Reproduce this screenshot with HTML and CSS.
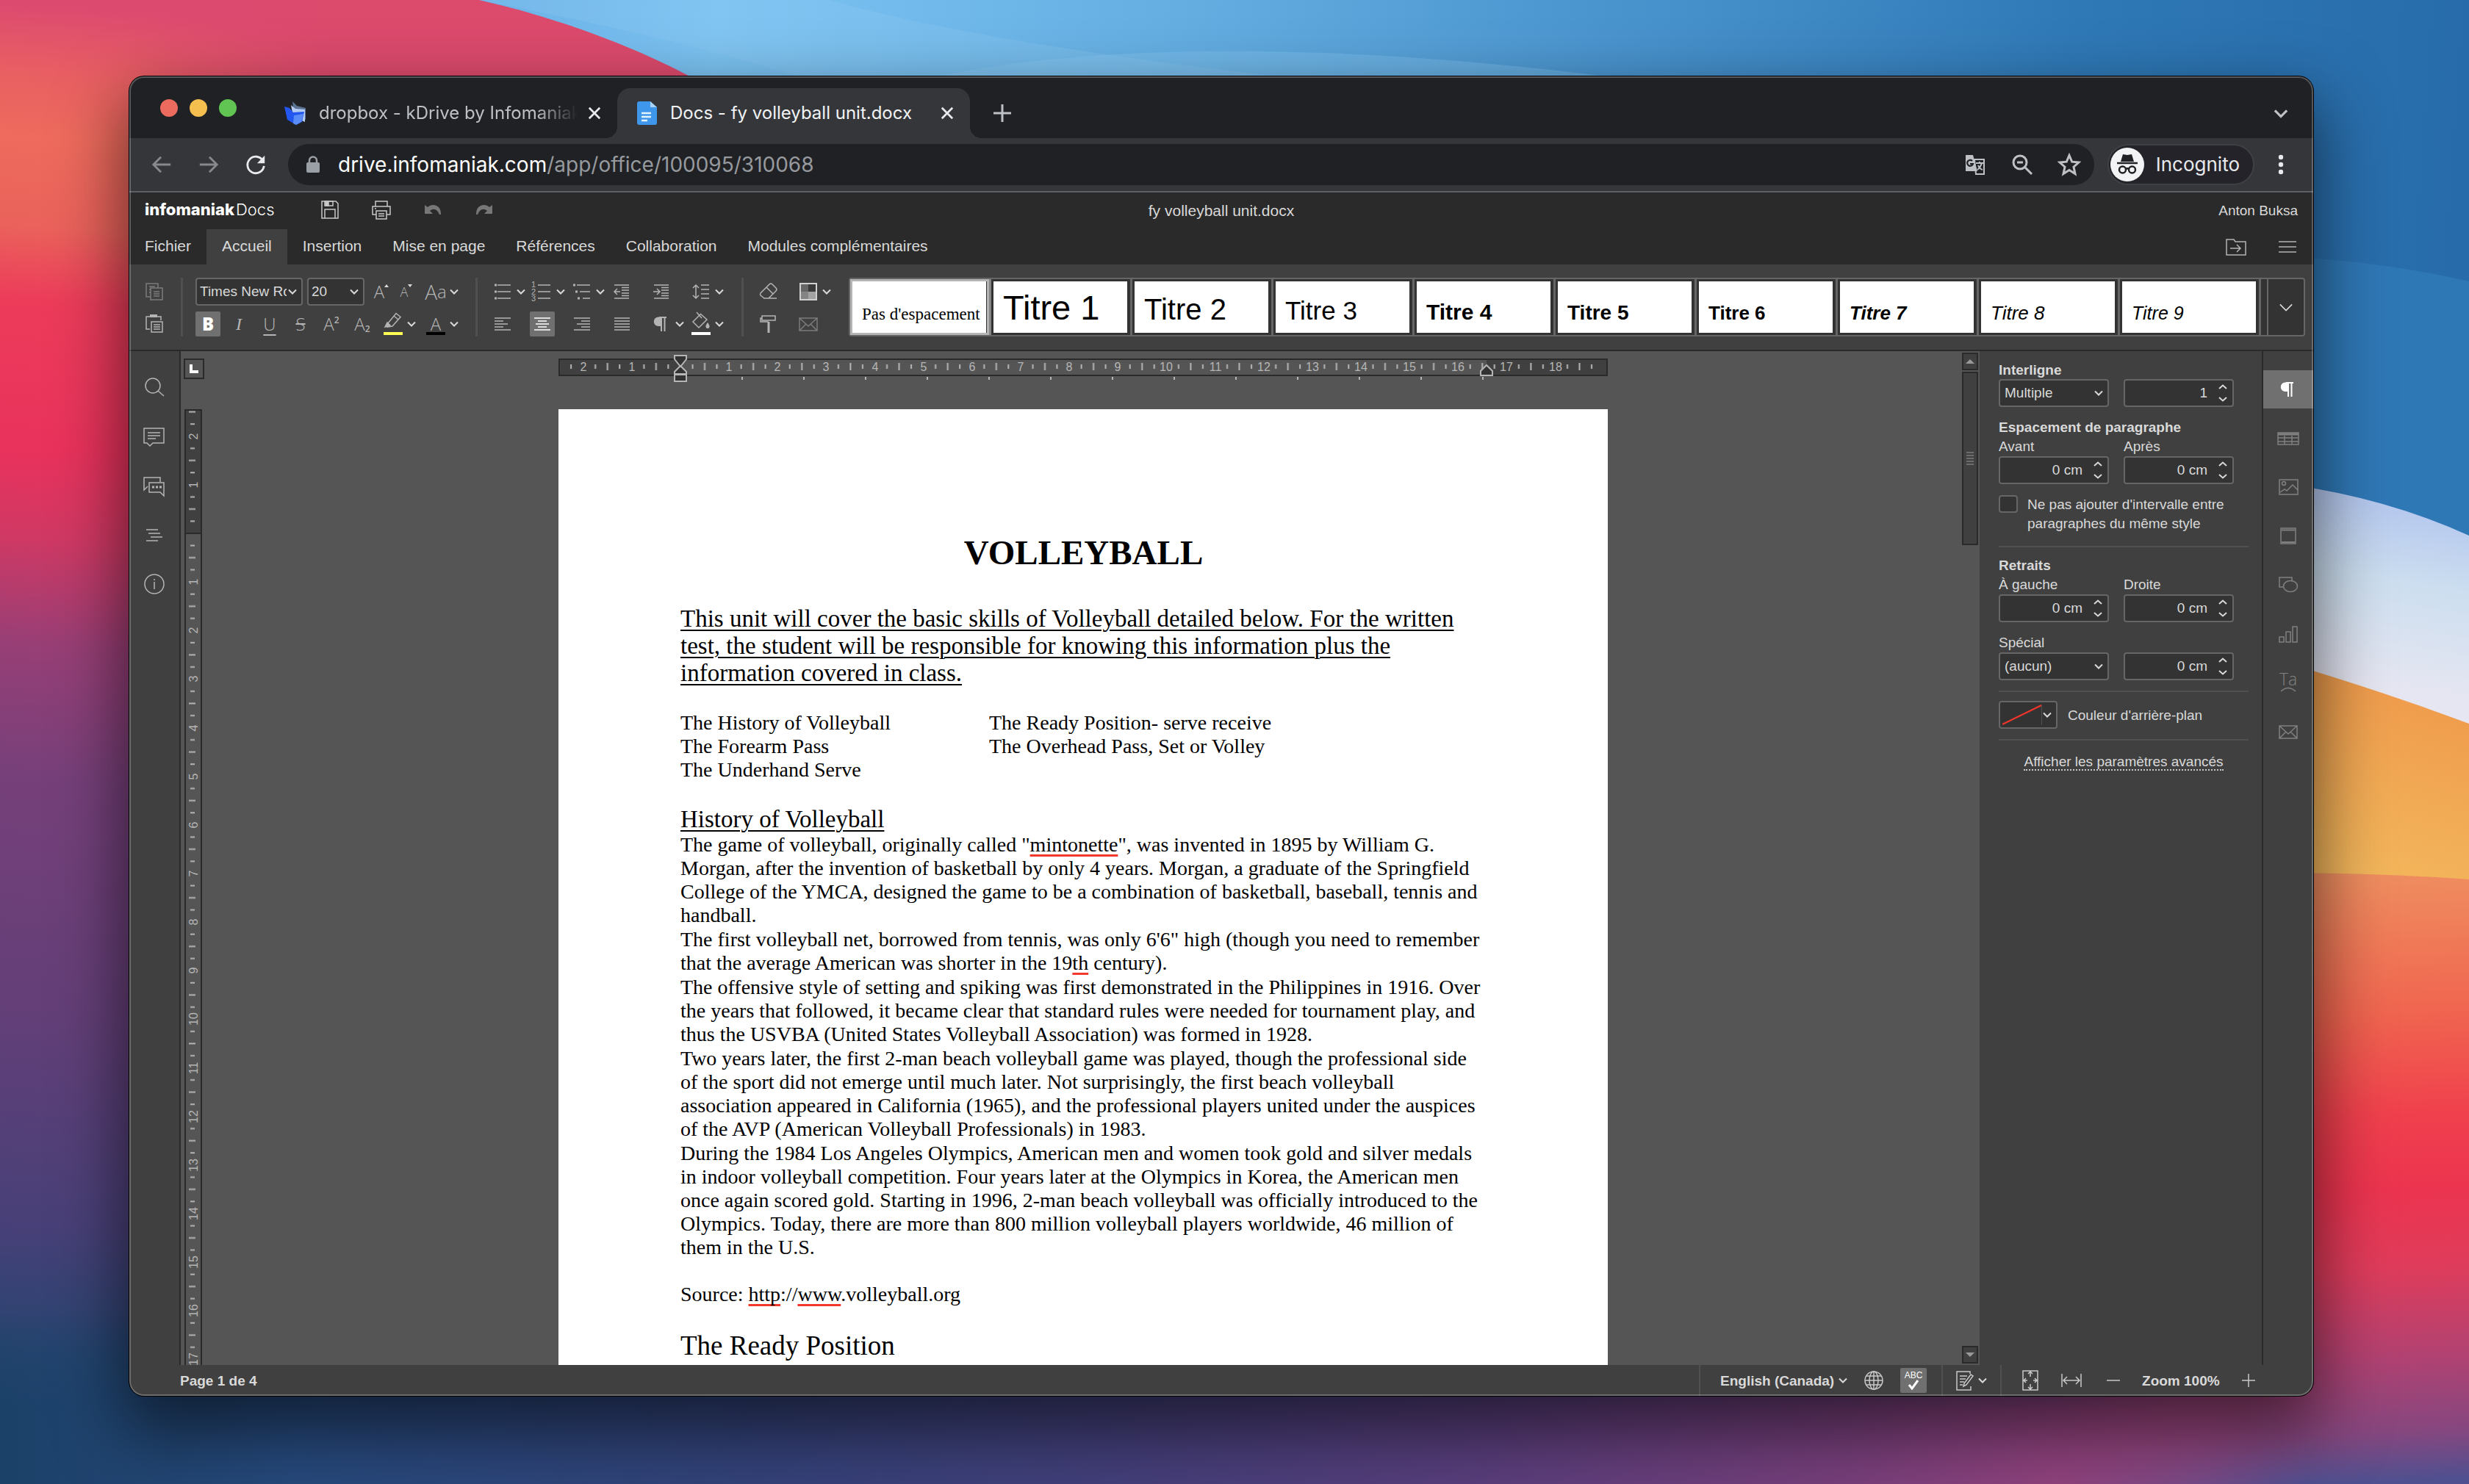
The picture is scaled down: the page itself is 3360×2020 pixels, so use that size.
FILE: index.html
```html
<!DOCTYPE html>
<html lang="fr">
<head>
<meta charset="utf-8">
<title>Docs - fy volleyball unit.docx</title>
<meta name="viewport" content="width=device-width, initial-scale=1">
<link rel="stylesheet" href="styles.css">
</head>
<body>

<svg class="sprite" aria-hidden="true">
  <symbol id="chev" viewBox="0 0 12 8"><path d="M1 1.500l5 5 5-5"/></symbol>
  <symbol id="spin" viewBox="0 0 12 24"><path d="M1 6l5-4.500 5 4.500M1 18l5 4.500 5-4.500"/></symbol>
  <symbol id="close" viewBox="0 0 20 20"><path d="M2 2l16 16M18 2L2 18"/></symbol>
  <symbol id="copy" viewBox="0 0 40 40"><path d="M15 27H9V9h16v6M13 13h8M13 17h3M13 21h2M15 15h16v16H15zM19 20h8M19 23h8M19 26h8"/></symbol>
  <symbol id="paste" viewBox="0 0 40 40"><path d="M14 27H9V10h20v5M16 17h15v14H16zM19 21h9M19 24h9M19 27h9"/><path d="M14 9h10" stroke-width="4"/></symbol>
  <symbol id="pen" viewBox="0 0 40 40"><path d="M13 22L24 8.500l6 5L19 26l-7 1zM21 12l6 5"/><path d="M9 27l3-6 4 4z" fill="currentColor"/></symbol>
  <symbol id="bullets" viewBox="0 0 40 40"><path d="M13 11h18M13 20h18M13 29h18"/><path d="M9 11h3M9 20h3M9 29h3" stroke-width="3"/></symbol>
  <symbol id="multi" viewBox="0 0 40 40"><path d="M13 11h18M17 20h14M21 29h10"/><path d="M8 11h3M11 20h3M14 29h3" stroke-width="3"/></symbol>
  <symbol id="outdent" viewBox="0 0 40 40"><path d="M10 11h20M10 29h20M20 14.500h10M20 18h10M20 22h10M20 25.500h10M10 20h8M14 16l-4 4 4 4"/></symbol>
  <symbol id="indent" viewBox="0 0 40 40"><path d="M10 11h20M10 29h20M20 14.500h10M20 18h10M20 22h10M20 25.500h10M9 20h9M14 16l4 4-4 4"/></symbol>
  <symbol id="spacing" viewBox="0 0 40 40"><path d="M20 11h11M20 17h11M20 23h11M20 29h11M13 11v18M9 15l4-4 4 4M9 25l4 4 4-4"/></symbol>
  <symbol id="eraser" viewBox="0 0 40 40"><path d="M14 29l-5-4q-1-1 0-3L21 10q2-2 4 0l5 5q2 2 0 4L20 29M13 29h18M17 14l9 9"/></symbol>
  <symbol id="al" viewBox="0 0 40 40"><path d="M9 12h22M9 16h12M9 20h18M9 24h12M9 28h22"/></symbol>
  <symbol id="ac" viewBox="0 0 40 40"><path d="M9 12h22M14 16h12M11 20h18M14 24h12M9 28h22"/></symbol>
  <symbol id="ar" viewBox="0 0 40 40"><path d="M9 12h22M19 16h12M13 20h18M19 24h12M9 28h22"/></symbol>
  <symbol id="aj" viewBox="0 0 40 40"><path d="M10 12h21M10 16h21M10 20h21M10 24h21M10 28h21"/></symbol>
  <symbol id="pilcrow" viewBox="0 0 40 40"><path d="M20 11v19M24.500 11v19M17 11h10" stroke-width="2"/><path d="M20 10.500h-4a6 6 0 0 0 0 12.500h4z" fill="currentColor" stroke="none"/></symbol>
  <symbol id="bucket" viewBox="0 0 40 40"><path d="M19 9l9 8-11 11-8-8L20 9M14 7l7 8"/><path d="M29 21q3 4 2.500 5.500a2.500 2.500 0 0 1-5 0Q26 25 29 21z" fill="currentColor" stroke="none"/></symbol>
  <symbol id="brush" viewBox="0 0 40 40"><path d="M11 9h18v6H11zM11 12H9v5h11"/><path d="M20 17v15" stroke-width="3"/></symbol>
  <symbol id="mail" viewBox="0 0 40 40"><path d="M8 12h24v17H8zM8 12l12 11 12-11M8 29l9-9M32 29l-9-9"/></symbol>
  <symbol id="save" viewBox="0 0 40 40"><path d="M9 8h19l3 3v20H9zM13 31V19h14v12"/><path d="M13 8h11v6H13z"/><path d="M14 9h4v5h-4z" fill="currentColor"/></symbol>
  <symbol id="print" viewBox="0 0 40 40"><path d="M12 15V8h16v7M13 26H8V15h24v11h-5M13 21h14v11H13zM16 25h8M16 28h8M11 18h2"/></symbol>
  <symbol id="undo" viewBox="0 0 40 40"><path d="M9 13v12h11l-4-4q6-5 11 1l2 4h2q0-12-10-13-5 0-8 3z" fill="currentColor" stroke="none"/></symbol>
  <symbol id="redo" viewBox="0 0 40 40"><path d="M31 13v12H20l4-4q-6-5-11 1l-2 4H9q0-12 10-13 5 0 8 3z" fill="currentColor" stroke="none"/></symbol>
  <symbol id="folder" viewBox="0 0 40 40"><path d="M7 10h10l2 3h14v18H7zM12 22h14M21 17l5 5-5 5"/></symbol>
  <symbol id="burger" viewBox="0 0 40 40"><path d="M8 13h24M8 20h24M8 27h24"/></symbol>
  <symbol id="search" viewBox="0 0 40 40"><circle cx="18" cy="18" r="10"/><path d="M25 25l8 7"/></symbol>
  <symbol id="comment" viewBox="0 0 40 40"><path d="M6 9h27v20H18l-4 4-4-4H6zM11 15h17M11 19h17M11 23h11"/></symbol>
  <symbol id="chat" viewBox="0 0 40 40"><path d="M28 15V9H6v17l5-5M13 16h20v18l-5-5H13z"/><path d="M17 22h3M22 22h3M27 22h3" stroke-width="3"/></symbol>
  <symbol id="nav" viewBox="0 0 40 40"><path d="M9 13h16M12 18h16M15 23h16M9 28h16"/></symbol>
  <symbol id="info" viewBox="0 0 40 40"><circle cx="20" cy="20" r="13"/><path d="M20 17v10M20 13v2"/></symbol>
  <symbol id="table" viewBox="0 0 40 40"><path d="M6 12h28v16H6zM6 19h28M6 24h28M15 16v12M25 16v12"/><path d="M6 14h28" stroke-width="3"/></symbol>
  <symbol id="image" viewBox="0 0 40 40"><path d="M8 10h25v20H8zM9 27l6-4 3 2 8-8 7 7"/><circle cx="14" cy="15" r="2.500"/></symbol>
  <symbol id="headfoot" viewBox="0 0 40 40"><path d="M10 9h20v21H10z"/><path d="M11 11.500h18M11 28h18" stroke-width="2"/></symbol>
  <symbol id="shape" viewBox="0 0 40 40"><path d="M13 23H8V10h17v5"/><ellipse cx="23" cy="22" rx="9.500" ry="7.500"/></symbol>
  <symbol id="chart" viewBox="0 0 40 40"><path d="M8 24h6v7H8zM17 17h6v14h-6zM26 10h6v21h-6z"/></symbol>
  <symbol id="globe" viewBox="0 0 40 40"><circle cx="20" cy="20" r="12"/><ellipse cx="20" cy="20" rx="6" ry="12"/><path d="M20 8v24M8 20h24M10 14h20M10 26h20"/></symbol>
  <symbol id="track" viewBox="0 0 40 40"><path d="M29 28v5H10V8h18v3M14 14h10M14 18h8M14 22h6M14 26h4"/><path d="M19 28l1-4 9-12 3 2-9 12z"/></symbol>
  <symbol id="fitpage" viewBox="0 0 40 40"><path d="M10 7h20v26H10zM20 9v6M17 11l3-3 3 3M20 31v-6M17 29l3 3 3-3M11 20h5M14 17l-3 3 3 3M29 20h-5M26 17l3 3-3 3"/></symbol>
  <symbol id="fitwidth" viewBox="0 0 40 40"><path d="M7 11v18M33 11v18M9 20h22M14 15l-5 5 5 5M26 15l5 5-5 5"/></symbol>
</svg>

<svg class="wallpaper" viewBox="0 0 3360 2020" preserveAspectRatio="none" aria-hidden="true">
  <defs>
    <linearGradient id="gl" gradientUnits="userSpaceOnUse" x1="0" y1="0" x2="-140" y2="2020">
      <stop offset="0" stop-color="#dc4a70"/><stop offset=".05" stop-color="#e96062"/><stop offset=".09" stop-color="#ee6b5d"/>
      <stop offset=".15" stop-color="#ea625b"/><stop offset=".2" stop-color="#ec3c5a"/><stop offset=".3" stop-color="#e9325c"/>
      <stop offset=".36" stop-color="#cf3964"/><stop offset=".43" stop-color="#983f76"/><stop offset=".52" stop-color="#76407a"/>
      <stop offset=".68" stop-color="#633f78"/><stop offset=".82" stop-color="#484078"/><stop offset=".91" stop-color="#25456f"/><stop offset="1" stop-color="#1c4168"/>
    </linearGradient>
    <linearGradient id="gtop" x1="0" y1="0" x2="1" y2="0">
      <stop offset=".18" stop-color="#dd4a70" stop-opacity="0"/><stop offset=".45" stop-color="#dc4a6c"/><stop offset="1" stop-color="#dc4a6c"/>
    </linearGradient>
    <linearGradient id="gblue" gradientUnits="userSpaceOnUse" x1="650" y1="0" x2="3360" y2="200">
      <stop offset="0" stop-color="#6bb1e6"/><stop offset=".12" stop-color="#7cc3f2"/><stop offset=".35" stop-color="#64aee2"/>
      <stop offset=".6" stop-color="#4690cb"/><stop offset=".8" stop-color="#2f79b7"/><stop offset="1" stop-color="#276baa"/>
    </linearGradient>
    <linearGradient id="gbot" x1="0" y1="0" x2="1" y2="0">
      <stop offset="0" stop-color="#1c4168"/><stop offset=".12" stop-color="#26497c"/><stop offset=".3" stop-color="#334279"/>
      <stop offset=".45" stop-color="#433f7a"/><stop offset=".6" stop-color="#593e7c"/><stop offset=".75" stop-color="#783f7b"/><stop offset=".9" stop-color="#a3457f"/><stop offset="1" stop-color="#8a4a84"/>
    </linearGradient>
    <linearGradient id="fadey" gradientUnits="userSpaceOnUse" x1="0" y1="1790" x2="0" y2="1920"><stop offset="0" stop-color="#000"/><stop offset="1" stop-color="#fff"/></linearGradient>
    <linearGradient id="fadex" gradientUnits="userSpaceOnUse" x1="2800" y1="0" x2="3140" y2="0"><stop offset="0" stop-color="#000"/><stop offset="1" stop-color="#fff"/></linearGradient>
    <mask id="my" maskUnits="userSpaceOnUse" x="0" y="0" width="3360" height="2020"><rect width="3360" height="2020" fill="url(#fadey)"/></mask>
    <mask id="mx" maskUnits="userSpaceOnUse" x="0" y="0" width="3360" height="2020"><rect width="3360" height="2020" fill="url(#fadex)"/></mask>
    <linearGradient id="gwhite" gradientUnits="userSpaceOnUse" x1="3250" y1="670" x2="3210" y2="930">
      <stop offset="0" stop-color="#b2c5ee"/><stop offset=".45" stop-color="#ccdeef"/><stop offset="1" stop-color="#e6e6f2"/>
    </linearGradient>
    <linearGradient id="gor" gradientUnits="userSpaceOnUse" x1="3300" y1="930" x2="3220" y2="1190">
      <stop offset="0" stop-color="#ef9a4c"/><stop offset="1" stop-color="#f3b65b"/>
    </linearGradient>
    <linearGradient id="gred" gradientUnits="userSpaceOnUse" x1="3148" y1="1188" x2="3180" y2="2020">
      <stop offset="0" stop-color="#ef8f60"/><stop offset=".24" stop-color="#f0644f"/><stop offset=".4" stop-color="#f0404d"/><stop offset=".52" stop-color="#ec344f"/>
      <stop offset=".65" stop-color="#df3c5b"/><stop offset=".8" stop-color="#b04272"/><stop offset=".92" stop-color="#85477f"/><stop offset="1" stop-color="#4f5090"/>
    </linearGradient>
  </defs>
  <rect width="3360" height="2020" fill="url(#gl)"/>
  <rect width="1000" height="140" fill="url(#gtop)"/>
  <rect y="1700" width="3360" height="320" fill="url(#gbot)" mask="url(#my)"/>
  <path d="M652 0C760 24 870 66 950 110L1400 400V1000H3360V0z" fill="url(#gblue)"/>
  <path d="M1130 0C1300 50 1600 90 1800 110H1100Q960 60 652 0z" fill="#8fccf5" opacity=".25"/>
  <path d="M1250 110C1500 50 1900 60 2300 120z" fill="#8fccf5" opacity=".3"/>
  <path d="M3000 346Q3200 346 3360 383V900H3000z" fill="#2f78b6"/>
  <path d="M3000 650Q3200 656 3360 729V1200H3000z" fill="url(#gwhite)"/>
  <path d="M3000 870Q3200 925 3360 985V1300H3000z" fill="url(#gor)"/>
  <path d="M2800 1200Q3100 1178 3360 1197V2020H2800z" fill="url(#gred)" mask="url(#mx)"/>
</svg>

<div class="window">

  <div class="tabstrip">
    <div class="lights"><button class="light red" aria-label="Fermer"></button><button class="light amber" aria-label="Réduire"></button><button class="light green" aria-label="Agrandir"></button></div>
    <div class="tab">
      <svg class="favicon" viewBox="0 0 34 34"><path d="M12 1l6 6 12 3v16L14 18z" fill="#5c7396"/><path d="M10 6l6 5 13 1v17L13 22z" fill="#b4ccf2"/><path d="M1 8l7 2 5 6 15-1-3 14-8 4L5 26z" fill="#2257f0"/><path d="M14 20l13-2-3 11-7 4-4-2z" fill="#5b8df8"/></svg>
      <span class="tab-title faded">dropbox - kDrive by Infomaniak</span>
      <button class="tab-close" aria-label="Fermer l'onglet"><svg><use href="#close"/></svg></button>
    </div>
    <div class="tab active">
      <svg class="favicon" viewBox="0 0 34 34"><path d="M6 1h15l9 8v21q0 3-3 3H6q-3 0-3-3V4q0-3 3-3z" fill="#3f97ec"/><path d="M21 1l9 8h-9z" fill="#a9d2fa"/><path d="M9 17h13M9 22h13M9 27h8" stroke="#e5f2ff" stroke-width="2.500"/></svg>
      <span class="tab-title">Docs - fy volleyball unit.docx</span>
      <button class="tab-close" aria-label="Fermer l'onglet"><svg><use href="#close"/></svg></button>
    </div>
    <button class="newtab" aria-label="Nouvel onglet"><svg viewBox="0 0 26 26"><path d="M13 1v24M1 13h24"/></svg></button>
    <button class="tabsearch" aria-label="Rechercher des onglets"><svg><use href="#chev"/></svg></button>
  </div>

  <div class="browserbar">
    <button class="navbtn dim" aria-label="Précédent"><svg viewBox="0 0 32 32"><path d="M29 16H4M15 5L4 16l11 11"/></svg></button>
    <button class="navbtn dim" aria-label="Suivant"><svg viewBox="0 0 32 32"><path d="M3 16h25M17 5l11 11-11 11"/></svg></button>
    <button class="navbtn" aria-label="Actualiser"><svg viewBox="0 0 32 32"><path d="M26.500 10.500A12 12 0 1 0 28 18" stroke-width="3"/><path d="M29 3v11H18z" fill="currentColor" stroke="none"/></svg></button>
    <div class="omnibox">
      <svg class="lock" viewBox="0 0 20 24"><path d="M5 10V6.500a5 5 0 0 1 10 0V10" fill="none" stroke="#9aa0a6" stroke-width="2.500"/><rect x="1" y="9" width="18" height="14" rx="2" fill="#9aa0a6"/></svg>
      <span class="url">drive.infomaniak.com<span>/app/office/100095/310068</span></span>
      <button class="omni" aria-label="Traduire"><svg viewBox="0 0 32 32"><path d="M15 9h13v20H17z" fill="none" stroke="#bdc1c6" stroke-width="2"/><path d="M3 3h10l6 22H3z" fill="#bdc1c6" stroke="none"/><path d="M17 14h10M22 12v2M25 14q-2 6-6 9M20 17q2 5 6 6" stroke-width="2"/><path d="M12 11a4 4 0 1 0 1 4h-4" stroke="#202124" stroke-width="2.200"/></svg></button>
      <button class="omni" aria-label="Zoom"><svg viewBox="0 0 32 32"><circle cx="13" cy="13" r="9"/><path d="M20 20l9 9M9 13h8"/></svg></button>
      <button class="omni" aria-label="Favoris"><svg viewBox="0 0 32 32"><path d="M16 3.500l3.700 8.700 9.300.8-7 6.200 2 9.300-8-5-8 5 2-9.300-7-6.200 9.300-.8z"/></svg></button>
    </div>
    <div class="incognito">
      <svg viewBox="0 0 46 46"><circle cx="23" cy="23" r="23" fill="#f1f3f4"/><path d="M17 9l6 1 6-1 3 10H14z" fill="#202124"/><path d="M9 21h28" stroke="#202124" stroke-width="2.500"/><g fill="none" stroke="#202124" stroke-width="2.500"><circle cx="16.500" cy="30" r="4.500"/><circle cx="29.500" cy="30" r="4.500"/><path d="M21 29q2-1.500 4 0"/></g></svg>
      <span>Incognito</span>
    </div>
    <button class="kebab" aria-label="Menu"><svg viewBox="0 0 8 28"><circle cx="4" cy="4" r="3.200"/><circle cx="4" cy="14" r="3.200"/><circle cx="4" cy="24" r="3.200"/></svg></button>
  </div>

  <header class="appbar">
    <div class="appbar-left">
      <div class="logo"><b>infomaniak</b><span>Docs</span></div>
      <div class="quick">
        <button aria-label="Enregistrer"><svg class="i"><use href="#save"/></svg></button>
        <button aria-label="Imprimer"><svg class="i"><use href="#print"/></svg></button>
        <button class="off" aria-label="Annuler"><svg class="i"><use href="#undo"/></svg></button>
        <button class="off" aria-label="Rétablir"><svg class="i"><use href="#redo"/></svg></button>
      </div>
    </div>
    <div class="doc-title">fy volleyball unit.docx</div>
    <div class="user">Anton Buksa</div>
  </header>

  <nav class="menubar">
    <button>Fichier</button><button class="on">Accueil</button><button>Insertion</button><button>Mise en page</button><button>Références</button><button>Collaboration</button><button>Modules complémentaires</button>
    <div class="menubar-right">
      <button aria-label="Ouvrir l'emplacement"><svg class="i"><use href="#folder"/></svg></button>
      <button aria-label="Options d'affichage"><svg class="i"><use href="#burger"/></svg></button>
    </div>
  </nav>

  <div class="ribbon">
    <div class="group clip">
      <button class="tb off" aria-label="Copier"><svg class="i"><use href="#copy"/></svg></button>
      <button class="tb" aria-label="Coller"><svg class="i"><use href="#paste"/></svg></button>
    </div>
    <div class="group font">
      <div class="row top">
        <label class="combo name"><select aria-label="Police"><option>Times New Roman</option></select><svg class="chev"><use href="#chev"/></svg></label>
        <label class="combo size"><select aria-label="Taille"><option>20</option></select><svg class="chev"><use href="#chev"/></svg></label>
        <div class="pair">
          <button class="tb glyph" aria-label="Agrandir la police">A<svg class="caret" viewBox="0 0 6 4"><path d="M0 4l3-4 3 4z"/></svg></button>
          <button class="tb glyph small" aria-label="Réduire la police">A<svg class="caret" viewBox="0 0 6 4"><path d="M0 0l3 4 3-4z"/></svg></button>
        </div>
        <button class="split" aria-label="Changer la casse"><span class="tb glyph case">A<small>a</small></span><svg class="chev"><use href="#chev"/></svg></button>
      </div>
      <div class="row bottom">
        <button class="tb glyph on" aria-label="Gras"><b>B</b></button>
        <button class="tb glyph" aria-label="Italique"><i>I</i></button>
        <button class="tb glyph" aria-label="Souligné"><u>U</u></button>
        <button class="tb glyph" aria-label="Barré"><s>S</s></button>
        <button class="tb glyph" aria-label="Exposant">A<sup>2</sup></button>
        <button class="tb glyph" aria-label="Indice">A<sub>2</sub></button>
        <button class="split" aria-label="Couleur de surlignage"><span class="tb bar yellow"><svg class="i"><use href="#pen"/></svg></span><svg class="chev"><use href="#chev"/></svg></button>
        <button class="split" aria-label="Couleur de police"><span class="tb glyph bar black">A</span><svg class="chev"><use href="#chev"/></svg></button>
      </div>
    </div>
    <div class="group para">
      <button class="split" aria-label="Puces"><span class="tb"><svg class="i"><use href="#bullets"/></svg></span><svg class="chev"><use href="#chev"/></svg></button>
      <button class="split" aria-label="Numérotation"><span class="tb"><svg class="i" viewBox="0 0 40 40"><path d="M14 11h17M14 20h17M14 29h17"/><g class="nums"><text x="8" y="14">1</text><text x="8" y="24">2</text><text x="8" y="33">3</text></g></svg></span><svg class="chev"><use href="#chev"/></svg></button>
      <button class="split" aria-label="Liste multiniveau"><span class="tb"><svg class="i"><use href="#multi"/></svg></span><svg class="chev"><use href="#chev"/></svg></button>
      <button class="tb" aria-label="Réduire le retrait"><svg class="i"><use href="#outdent"/></svg></button>
      <button class="tb" aria-label="Augmenter le retrait"><svg class="i"><use href="#indent"/></svg></button>
      <button class="split" aria-label="Interligne"><span class="tb"><svg class="i"><use href="#spacing"/></svg></span><svg class="chev"><use href="#chev"/></svg></button>
      <button class="tb" aria-label="Aligner à gauche"><svg class="i"><use href="#al"/></svg></button>
      <button class="tb on" aria-label="Centrer"><svg class="i"><use href="#ac"/></svg></button>
      <button class="tb" aria-label="Aligner à droite"><svg class="i"><use href="#ar"/></svg></button>
      <button class="tb" aria-label="Justifier"><svg class="i"><use href="#aj"/></svg></button>
      <button class="split" aria-label="Caractères non imprimables"><span class="tb"><svg class="i"><use href="#pilcrow"/></svg></span><svg class="chev"><use href="#chev"/></svg></button>
      <button class="split" aria-label="Remplissage"><span class="tb bar white"><svg class="i"><use href="#bucket"/></svg></span><svg class="chev"><use href="#chev"/></svg></button>
    </div>
    <div class="group tools">
      <button class="tb" aria-label="Effacer le style"><svg class="i"><use href="#eraser"/></svg></button>
      <button class="split" aria-label="Jeu de couleurs"><span class="tb"><svg class="scheme" viewBox="0 0 24 24"><path d="M1 1h11v11H1z" fill="#666"/><path d="M12 1h11v11H12z" fill="#3a3a3a"/><path d="M1 12h11v11H1z" fill="#848484"/><path d="M12 12h11v11H12z" fill="#a3a3a3"/><path d="M1 1h22v22H1z" fill="none" stroke="#d0d0d0" stroke-width="2"/></svg></span><svg class="chev"><use href="#chev"/></svg></button>
      <button class="tb" aria-label="Copier le style"><svg class="i"><use href="#brush"/></svg></button>
      <button class="tb off" aria-label="Fusion et publipostage"><svg class="i"><use href="#mail"/></svg></button>
    </div>
    <div class="gallery">
      <div class="cards">
        <button class="card picked"><span class="s0">Pas d'espacement</span></button>
        <button class="card"><span class="s1">Titre 1</span></button>
        <button class="card"><span class="s2">Titre 2</span></button>
        <button class="card"><span class="s3">Titre 3</span></button>
        <button class="card"><span class="s4">Titre 4</span></button>
        <button class="card"><span class="s5">Titre 5</span></button>
        <button class="card"><span class="s6">Titre 6</span></button>
        <button class="card"><span class="s7">Titre 7</span></button>
        <button class="card"><span class="s8">Titre 8</span></button>
        <button class="card"><span class="s9">Titre 9</span></button>
      </div>
      <button class="more" aria-label="Plus de styles"><svg><use href="#chev"/></svg></button>
    </div>
  </div>

  <main class="workspace">
    <aside class="leftbar">
      <button aria-label="Rechercher"><svg class="i"><use href="#search"/></svg></button>
      <button aria-label="Commentaires"><svg class="i"><use href="#comment"/></svg></button>
      <button aria-label="Chat"><svg class="i"><use href="#chat"/></svg></button>
      <button aria-label="Navigation"><svg class="i"><use href="#nav"/></svg></button>
      <button aria-label="À propos"><svg class="i"><use href="#info"/></svg></button>
    </aside>

    <div class="canvas">
      <div class="corner"><button class="tabstop" aria-label="Type de tabulation"><svg viewBox="0 0 12 12"><path d="M0 0h4v8h8v4H0z"/></svg></button></div>
      <div class="hruler">
        <svg class="ruler">
          <defs>
            <pattern id="hticks" patternUnits="userSpaceOnUse" x="166" y="0" width="66.14" height="40"><path d="M16.500 16v6M33 14v10M49.500 16v6" stroke="#b6b6b6" stroke-width="2"/></pattern>
            <pattern id="htabs" patternUnits="userSpaceOnUse" x="208" y="0" width="84" height="42"><path d="M42 33v4" stroke="#b6b6b6" stroke-width="2"/></pattern>
          </defs>
          <rect x="1" y="9" width="1426" height="22" fill="#404040"/>
          <rect x="166" y="9" width="1097" height="22" fill="#555"/>
          <rect x="1" y="9" width="1426" height="22" fill="url(#hticks)"/>
          <rect x="1" y="9" width="1426" height="22" fill="none" stroke="#2a2a2a" stroke-width="2"/>
          <rect x="210" y="32" width="1060" height="6" fill="url(#htabs)"/>
          <g class="digits">
            <text x="34" y="25">2</text><text x="100" y="25">1</text><text x="232" y="25">1</text><text x="298" y="25">2</text><text x="364" y="25">3</text><text x="431" y="25">4</text><text x="497" y="25">5</text><text x="563" y="25">6</text><text x="629" y="25">7</text><text x="695" y="25">8</text><text x="761" y="25">9</text><text x="827" y="25">10</text><text x="894" y="25">11</text><text x="960" y="25">12</text><text x="1026" y="25">13</text><text x="1092" y="25">14</text><text x="1158" y="25">15</text><text x="1224" y="25">16</text><text x="1290" y="25">17</text><text x="1357" y="25">18</text>
          </g>
          <g fill="#333" stroke="#b6b6b6" stroke-width="2"><path d="M158 4h16v5l-8 10-8-10z"/><path d="M158 29v-3l8-8 8 8v3zM158 30h16v9h-16z"/><path d="M1255 31v-6l8-8 8 8v6z"/></g>
        </svg>
      </div>
      <div class="vruler">
        <svg class="ruler">
          <defs><pattern id="vticks" patternUnits="userSpaceOnUse" x="0" y="169" width="24" height="66.14"><path d="M8 16.500h6M6 33h9M8 49.500h6" stroke="#b6b6b6" stroke-width="2"/></pattern></defs>
          <rect x="1" y="1" width="22" height="2000" fill="#555"/>
          <rect x="1" y="1" width="22" height="168" fill="#404040" stroke="#2a2a2a" stroke-width="2"/>
          <rect x="1" y="1" width="22" height="100%" fill="url(#vticks)"/>
          <rect x="1" y="1" width="22" height="2000" fill="none" stroke="#2a2a2a" stroke-width="2"/>
          <g class="digits">
            <text transform="translate(18 37) rotate(-90)">2</text><text transform="translate(18 103) rotate(-90)">1</text><text transform="translate(18 235) rotate(-90)">1</text><text transform="translate(18 301) rotate(-90)">2</text><text transform="translate(18 367) rotate(-90)">3</text><text transform="translate(18 434) rotate(-90)">4</text><text transform="translate(18 500) rotate(-90)">5</text><text transform="translate(18 566) rotate(-90)">6</text><text transform="translate(18 632) rotate(-90)">7</text><text transform="translate(18 698) rotate(-90)">8</text><text transform="translate(18 764) rotate(-90)">9</text><text transform="translate(18 830) rotate(-90)">10</text><text transform="translate(18 897) rotate(-90)">11</text><text transform="translate(18 963) rotate(-90)">12</text><text transform="translate(18 1029) rotate(-90)">13</text><text transform="translate(18 1095) rotate(-90)">14</text><text transform="translate(18 1161) rotate(-90)">15</text><text transform="translate(18 1227) rotate(-90)">16</text><text transform="translate(18 1293) rotate(-90)">17</text>
          </g>
        </svg>
      </div>
      <div class="pages">
        <article class="page" lang="en">
          <h1>VOLLEYBALL</h1>
          <p class="intro">This unit will cover the basic skills of Volleyball detailed below. For the written test, the student will be responsible for knowing this information plus the information covered in class.</p>
          <div class="topics">
            <div>The History of Volleyball<br>The Forearm Pass<br>The Underhand Serve</div>
            <div>The Ready Position- serve receive<br>The Overhead Pass, Set or Volley</div>
          </div>
          <h2 class="lined">History of Volleyball</h2>
          <p>The game of volleyball, originally called "<span class="typo">mintonette</span>", was invented in 1895 by William G. Morgan, after the invention of basketball by only 4 years. Morgan, a graduate of the Springfield College of the YMCA, designed the game to be a combination of basketball, baseball, tennis and handball.</p>
          <p>The first volleyball net, borrowed from tennis, was only 6'6" high (though you need to remember that the average American was shorter in the 19<span class="typo">th</span> century).</p>
          <p>The offensive style of setting and spiking was first demonstrated in the Philippines in 1916. Over the years that followed, it became clear that standard rules were needed for tournament play, and thus the USVBA (United States Volleyball Association) was formed in 1928.</p>
          <p>Two years later, the first 2-man beach volleyball game was played, though the professional side of the sport did not emerge until much later. Not surprisingly, the first beach volleyball association appeared in California (1965), and the professional players united under the auspices of the AVP (American Volleyball Professionals) in 1983.</p>
          <p>During the 1984 Los Angeles Olympics, American men and women took gold and silver medals in indoor volleyball competition. Four years later at the Olympics in Korea, the American men once again scored gold. Starting in 1996, 2-man beach volleyball was officially introduced to the Olympics. Today, there are more than 800 million volleyball players worldwide, 46 million of them in the U.S.</p>
          <p class="source">Source: <span class="typo">http</span>://<span class="typo">www</span>.volleyball.org</p>
          <h2 class="big">The Ready Position</h2>
        </article>
      </div>
      <div class="scroll">
        <button aria-label="Défiler vers le haut"><svg viewBox="0 0 12 6"><path d="M0 6l6-6 6 6z"/></svg></button>
        <div class="track"><div class="thumb"><svg viewBox="0 0 10 18"><path d="M0 1h10M0 5h10M0 9h10M0 13h10M0 17h10"/></svg></div></div>
        <button aria-label="Défiler vers le bas"><svg viewBox="0 0 12 6"><path d="M0 0l6 6 6-6z"/></svg></button>
      </div>
    </div>

    <aside class="panel">
      <section>
        <h3>Interligne</h3>
        <div class="two">
          <label class="combo"><select aria-label="Interligne"><option>Multiple</option></select><svg class="chev"><use href="#chev"/></svg></label>
          <label class="spin"><input type="text" value="1" aria-label="Valeur d'interligne"><svg><use href="#spin"/></svg></label>
        </div>
        <h3 class="gap">Espacement de paragraphe</h3>
        <div class="two">
          <label class="field">Avant<span class="spin"><input type="text" value="0 cm"><svg><use href="#spin"/></svg></span></label>
          <label class="field">Après<span class="spin"><input type="text" value="0 cm"><svg><use href="#spin"/></svg></span></label>
        </div>
        <label class="check"><input type="checkbox"><span>Ne pas ajouter d'intervalle entre<br>paragraphes du même style</span></label>
      </section>
      <section>
        <h3>Retraits</h3>
        <div class="two">
          <label class="field">À gauche<span class="spin"><input type="text" value="0 cm"><svg><use href="#spin"/></svg></span></label>
          <label class="field">Droite<span class="spin"><input type="text" value="0 cm"><svg><use href="#spin"/></svg></span></label>
        </div>
        <div class="two special">
          <label class="field">Spécial<span class="combo"><select><option>(aucun)</option></select><svg class="chev"><use href="#chev"/></svg></span></label>
          <label class="spin"><input type="text" value="0 cm" aria-label="Retrait spécial"><svg><use href="#spin"/></svg></label>
        </div>
      </section>
      <section class="fill">
        <button class="swatch" aria-labelledby="bgcolor"><svg class="none" viewBox="0 0 54 26" preserveAspectRatio="none"><path d="M0 25L54 1"/></svg><svg class="chev"><use href="#chev"/></svg></button>
        <span id="bgcolor">Couleur d'arrière-plan</span>
      </section>
      <div class="advanced"><a href="#avances">Afficher les paramètres avancés</a></div>
    </aside>

    <aside class="rightbar">
      <button class="on" aria-label="Paragraphe"><svg class="i"><use href="#pilcrow"/></svg></button>
      <button aria-label="Tableau"><svg class="i"><use href="#table"/></svg></button>
      <button aria-label="Image"><svg class="i"><use href="#image"/></svg></button>
      <button aria-label="En-tête et pied de page"><svg class="i"><use href="#headfoot"/></svg></button>
      <button aria-label="Forme"><svg class="i"><use href="#shape"/></svg></button>
      <button aria-label="Graphique"><svg class="i"><use href="#chart"/></svg></button>
      <button aria-label="Texte Art"><svg class="i" viewBox="0 0 40 40"><text class="ta" x="20" y="24">Ta</text><path d="M10 32q10-9 20 0"/></svg></button>
      <button aria-label="Publipostage"><svg class="i"><use href="#mail"/></svg></button>
    </aside>
  </main>

  <footer class="status">
    <span class="pageno">Page 1 de 4</span>
    <div class="cell lang"><button class="text">English (Canada)<svg class="chev"><use href="#chev"/></svg></button><button class="tb" aria-label="Langue du document"><svg class="i"><use href="#globe"/></svg></button><button class="tb on abc" aria-label="Vérification orthographique">ABC<svg viewBox="0 0 16 14"><path d="M2 7l4 5 8-11"/></svg></button></div>
    <div class="cell review"><button class="split" aria-label="Suivi des modifications"><span class="tb"><svg class="i"><use href="#track"/></svg></span><svg class="chev"><use href="#chev"/></svg></button></div>
    <div class="cell zoom">
      <button class="tb" aria-label="Ajuster à la page"><svg class="i"><use href="#fitpage"/></svg></button>
      <button class="tb" aria-label="Ajuster à la largeur"><svg class="i"><use href="#fitwidth"/></svg></button>
      <button class="tb" aria-label="Zoom arrière"><svg class="i" viewBox="0 0 40 40"><path d="M11 20h18"/></svg></button>
      <button class="text">Zoom 100%</button>
      <button class="tb" aria-label="Zoom avant"><svg class="i" viewBox="0 0 40 40"><path d="M11 20h18M20 11v18"/></svg></button>
    </div>
  </footer>
</div>
</body>
</html>
```
FILE: styles.css
```css
:root {
  --head: #2a2a2a;
  --bar: #404040;
  --canvas: #555;
  --field: #333;
  --line: #666;
  --rule: #505050;
  --text: #d9d9d9;
  --icon: #b4b4b4;
  --on: #707070;
  --ui: "Liberation Sans", Arial, sans-serif;
}

* { box-sizing: border-box; }

body {
  margin: 0;
  height: 100vh;
  padding: 104px 212px 120px 176px;
  display: grid;
  position: relative;
  overflow: hidden;
  font: 19px/25px var(--ui);
  color: var(--text);
}

button {
  border: 0;
  padding: 0;
  margin: 0;
  background: none;
  font: inherit;
  color: inherit;
  display: flex;
  align-items: center;
  justify-content: center;
}

svg { display: block; flex: none; }
.sprite { position: absolute; width: 0; height: 0; }
.wallpaper { position: absolute; inset: 0; width: 100%; height: 100%; }

.i {
  width: 40px;
  height: 40px;
  fill: none;
  stroke: currentColor;
  stroke-width: 1.5;
  overflow: visible;
}

.chev {
  width: 12px;
  height: 8px;
  fill: none;
  stroke: var(--text);
  stroke-width: 2;
}

.window {
  position: relative;
  display: flex;
  flex-direction: column;
  min-height: 0;
  border-radius: 20px;
  background: var(--bar);
  box-shadow: 0 0 0 1px #000, 0 40px 90px 10px rgba(0, 0, 0, .55);
  overflow: clip;
}

.window::after {
  content: "";
  position: absolute;
  inset: 0;
  border-radius: 20px;
  box-shadow: inset 0 0 0 2px rgba(255, 255, 255, .24);
  pointer-events: none;
}

/* browser chrome */
.tabstrip {
  height: 84px;
  flex: none;
  display: flex;
  padding: 16px 0 0 42px;
  background: #202124;
  font: 24px/28px Inter, sans-serif;
  color: #bdc1c6;
}

.lights { display: flex; gap: 16px; width: 152px; padding-top: 15px; }
.light { width: 24px; height: 24px; border-radius: 50%; }
.red { background: #ed6a5e; }
.amber { background: #f5bf4f; }
.green { background: #61c554; }

.tab {
  width: 470px;
  display: flex;
  align-items: center;
  gap: 14px;
  padding: 0 22px 0 16px;
}

.tab.active {
  position: relative;
  width: 480px;
  padding: 0 22px 0 24px;
  border-radius: 18px 18px 0 0;
  background: #35363a;
  color: #f1f3f4;
}

.tab.active::before,
.tab.active::after {
  content: "";
  position: absolute;
  bottom: 0;
  width: 16px;
  height: 16px;
}

.tab.active::before { right: 100%; background: radial-gradient(circle at 0 0, transparent 16px, #35363a 16px); }
.tab.active::after { left: 100%; background: radial-gradient(circle at 100% 0, transparent 16px, #35363a 16px); }
.favicon { width: 34px; height: 34px; }
.tab-title { flex: 1; min-width: 0; white-space: nowrap; overflow: hidden; }
.faded { mask-image: linear-gradient(90deg, #000 84%, transparent); }
.tab-close svg { width: 18px; height: 18px; stroke: #e8eaed; stroke-width: 3; }
.newtab { width: 88px; }
.newtab svg { width: 26px; height: 26px; stroke: #bdc1c6; stroke-width: 3; }
.tabsearch { margin-left: auto; width: 88px; }
.tabsearch svg { width: 20px; height: 13px; fill: none; stroke: #bdc1c6; stroke-width: 2; }

.browserbar {
  height: 74px;
  flex: none;
  display: flex;
  align-items: center;
  padding: 0 24px 0 12px;
  background: #35363a;
  border-bottom: 2px solid #5f6065;
  font: 28px/32px Inter, sans-serif;
  color: #e8eaed;
}

.navbtn { width: 64px; height: 56px; }
.navbtn.dim { color: #86888b; }
.navbtn svg { width: 30px; height: 30px; fill: none; stroke: currentColor; stroke-width: 3; }

.omnibox {
  flex: 1;
  height: 56px;
  margin: 0 18px 0 12px;
  padding: 0 2px 0 24px;
  display: flex;
  align-items: center;
  border-radius: 28px;
  background: #202124;
}

.lock { width: 20px; height: 24px; }
.url { flex: 1; margin-left: 24px; color: #fff; }
.url span { color: #969a9f; }
.omni { width: 64px; height: 56px; }
.omni svg { width: 32px; height: 32px; fill: none; stroke: #bdc1c6; stroke-width: 3; }

.incognito {
  height: 56px;
  display: flex;
  align-items: center;
  gap: 16px;
  padding: 0 18px 0 2px;
  border: 2px solid #3f4045;
  border-radius: 28px;
  background: #242329;
  font-size: 26px;
}

.incognito svg { width: 46px; height: 46px; }
.kebab { width: 40px; height: 56px; margin-left: 16px; }
.kebab svg { width: 8px; height: 28px; fill: #e8eaed; }

/* application header */
.appbar {
  height: 50px;
  flex: none;
  display: grid;
  grid-template-columns: 1fr auto 1fr;
  align-items: center;
  padding: 0 21px 2px;
  background: var(--head);
}

.appbar-left { display: flex; align-items: center; }
.logo { width: 217px; display: flex; gap: 2px; color: #fff; font: 22px/26px Inter, sans-serif; padding-bottom: 2px; }
.logo b { font-weight: 800; }
.logo span { font-weight: 300; }
.quick { display: flex; color: #c8c8c8; }
.quick button { width: 70px; height: 48px; }
.quick .off { color: #777; }
.doc-title { font-size: 21px; }
.user { text-align: right; }

.menubar {
  height: 48px;
  flex: none;
  display: flex;
  background: var(--head);
  font-size: 21px;
}

.menubar button { padding: 0 21px 3px; }
.menubar .on { background: var(--bar); }
.menubar-right { margin-left: auto; display: flex; color: var(--icon); }
.menubar-right button { width: 70px; padding: 0; }

/* ribbon */
.ribbon {
  height: 118px;
  flex: none;
  display: flex;
  padding: 18px 11px 18px 17px;
  border-bottom: 2px solid #2a2a2a;
  color: var(--icon);
}

.group { display: grid; align-content: space-between; padding-right: 19px; }
.tb { position: relative; width: 34px; height: 34px; border-radius: 2px; display: flex; align-items: center; justify-content: center; }
.tb.off { color: #7b7b7b; }
.tb.on { background: var(--on); color: #fff; }
.split { height: 34px; }
.split .chev { margin: 0 2px; }
.row { display: flex; align-items: center; }
.row.top { gap: 6px; height: 38px; }
.row.bottom { gap: 8px; }
.pair { display: flex; }
.clip { padding-top: 2px; border-right: 3px solid var(--rule); width: 56px; }
.font { padding-left: 17px; border-right: 3px solid var(--rule); width: 401px; }

.para {
  width: 362px;
  grid-template-columns: repeat(6, 54px);
  padding: 0 0 0 17px;
  border-right: 3px solid var(--rule);
}

.tools { width: 143px; grid-template-columns: 54px 54px; padding: 0 0 0 17px; }
.para > :nth-child(-n+6), .tools > :nth-child(-n+2) { height: 38px; }
.para > *, .tools > * { justify-content: flex-start; }
.para > .tb, .tools > .tb { justify-content: center; }
.scheme { width: 24px; height: 24px; }

.glyph { font: 300 24px/34px "Open Sans", sans-serif; }
.glyph.small { font-size: 18px; }
.glyph.case { font-size: 28px; }
.glyph small { font-size: 24px; }
.glyph b { font-weight: 800; }
.glyph i { font-family: "Liberation Serif", serif; }
.glyph u { text-underline-offset: 5px; text-decoration-thickness: 2px; }
.glyph s { text-decoration-thickness: 2px; }
.glyph sup, .glyph sub { font-size: 12px; font-weight: 600; line-height: 12px; }
.glyph sup { align-self: flex-start; padding-top: 6px; }
.glyph sub { align-self: flex-end; padding-bottom: 4px; }
.caret { width: 6px; height: 4px; fill: var(--text); align-self: flex-start; margin-top: 7px; }

.bar::after {
  content: "";
  position: absolute;
  left: 4px;
  right: 4px;
  bottom: 2px;
  height: 4px;
}

.bar .i { margin-bottom: 6px; }
.yellow::after { background: #ffff54; }
.black::after { background: #000; }
.white::after { background: #fff; }
.nums text { font: 11px var(--ui); text-anchor: middle; fill: currentColor; stroke: none; }

.combo { position: relative; display: block; }

.combo select,
.spin input {
  display: block;
  width: 100%;
  height: 38px;
  margin: 0;
  padding: 0 30px 0 6px;
  appearance: none;
  border: 2px solid var(--line);
  border-radius: 4px;
  background: var(--field);
  color: var(--text);
  font: 19px/34px var(--ui);
}

.combo .chev { position: absolute; right: 8px; top: 15px; }
.combo.name { width: 146px; }
.combo.size { width: 78px; }
.combo.name select { padding-right: 20px; padding-left: 4px; }
.combo.size select { padding-left: 4px; }

.gallery {
  flex: 1;
  min-width: 0;
  display: flex;
  border: 2px solid var(--line);
  border-radius: 4px;
  background: var(--field);
}

.cards { flex: 1; min-width: 0; display: flex; overflow: hidden; }
.card { flex: none; width: 192px; padding: 0 4px 0 3px; border-right: 3px solid var(--line); }
.card.picked { box-shadow: inset 0 0 0 3px #b5b5b5; border-right-color: #858585; }

.card span {
  display: block;
  width: 100%;
  height: 70px;
  padding: 0 8px 0 13px;
  overflow: hidden;
  white-space: nowrap;
  text-align: left;
  background: #fff;
  color: #000;
  line-height: 20px;
}

.card span::before { content: ""; display: inline-block; height: 52px; }
.s0 { font: 23px "Liberation Serif", serif; }
.s1 { font-size: 47px; }
.s2 { font-size: 40px; }
.s3 { font-size: 35px; }
.s4 { font-size: 30px; font-weight: 700; }
.s5 { font-size: 28px; font-weight: 700; }
.s6 { font-size: 26px; font-weight: 700; }
.s7 { font-size: 26px; font-weight: 700; font-style: italic; }
.s8 { font-size: 26px; font-style: italic; }
.s9 { font-size: 25px; font-style: italic; }
.more { width: 50px; border-left: 2px solid var(--line); }
.more svg { width: 20px; height: 13px; fill: none; stroke: var(--text); stroke-width: 1; }

/* workspace */
.workspace { flex: 1; min-height: 0; display: grid; grid-template-columns: 70px 1fr 386px 68px; }
.leftbar { padding-top: 15px; border-right: 2px solid #2a2a2a; color: var(--icon); }
.leftbar button { width: 100%; height: 67px; }

.canvas {
  min-width: 0;
  min-height: 0;
  display: grid;
  grid-template: 79px 1fr / 32px 1fr 22px;
  padding-right: 2px;
  background: var(--canvas);
}

.corner { padding: 10px 0 0 4px; }
.tabstop { width: 28px; height: 28px; border: 2px solid #2a2a2a; }
.tabstop svg { width: 12px; height: 12px; fill: #fff; }
.hruler { padding-top: 2px; display: flex; justify-content: center; }
.hruler .ruler { width: 1428px; height: 42px; }
.vruler { grid-row: 2; padding-left: 5px; overflow: hidden; }
.vruler .ruler { width: 24px; height: 100%; }
.digits text { font: 16px var(--ui); fill: #b6b6b6; text-anchor: middle; }
.pages { grid-row: 2; min-height: 0; overflow: hidden; display: flex; justify-content: center; align-items: flex-start; }

.page {
  width: 1428px;
  min-height: 100%;
  padding: 168px 165px 0 166px;
  background: #fff;
  color: #000;
  font: 28px/32px "Liberation Serif", "Times New Roman", serif;
}

.page h1 { margin: 0 0 45px; font-size: 47px; line-height: 54px; text-align: center; }
.page p { margin: 0 0 1px; }
.page .intro { margin: 0 0 33px; font-size: 33px; line-height: 37px; text-decoration: underline; text-decoration-thickness: 2px; text-underline-offset: 4px; }
.topics { display: grid; grid-template-columns: 420px 1fr; margin-bottom: 33px; }
.page h2 { margin: 0; font-weight: 400; font-size: 33px; line-height: 37px; }
.lined { text-decoration: underline; text-decoration-thickness: 2px; text-underline-offset: 4px; }
.page .source { margin: 32px 0; }
.page .big { font-size: 37px; line-height: 43px; }
.typo { text-decoration: underline 3px #f2392c; text-underline-offset: 4px; text-decoration-skip-ink: none; }

.scroll { grid-column: 3; grid-row: 1 / 3; padding: 2px 0; display: flex; flex-direction: column; gap: 2px; }
.scroll button { height: 24px; border: 2px solid #2a2a2a; background: var(--bar); }
.scroll button svg { width: 12px; height: 6px; fill: #999; }
.track { flex: 1; }
.thumb { height: 236px; border: 2px solid #2a2a2a; background: var(--bar); display: grid; place-items: center; }
.thumb svg { width: 10px; height: 18px; stroke: #999; stroke-width: 1; }

/* paragraph settings */
.panel { padding: 13px 18px 0 26px; border-right: 2px solid #2a2a2a; }
.panel section { padding-bottom: 36px; border-bottom: 2px solid var(--rule); }
.panel section + section { padding: 12px 0 14px; }
.panel h3 { margin: 0; font-size: 19px; line-height: 25px; }
.panel h3.gap { margin-top: 15px; }
.two { display: grid; grid-template-columns: 150px 150px; gap: 20px; align-items: end; }
.field { display: block; line-height: 27px; }
.field > span { display: block; }
.special { margin-top: 14px; }
.spin { position: relative; display: block; }
.spin input { padding: 0 34px 0 4px; text-align: right; }
.spin svg { position: absolute; right: 9px; top: 7px; width: 12px; height: 24px; fill: none; stroke: var(--text); stroke-width: 2; }
.check { display: flex; gap: 13px; margin: 15px 0 -19px; }
.check input { appearance: none; width: 26px; height: 24px; margin: 0; flex: none; border: 2px solid var(--line); border-radius: 4px; background: var(--field); }
.check span { line-height: 26px; }
.fill { display: flex; align-items: center; gap: 14px; }
.swatch { width: 80px; height: 38px; padding: 0 6px 0 3px; justify-content: space-between; border: 2px solid var(--line); border-radius: 4px; background: var(--field); }
.swatch .none { width: 54px; height: 28px; fill: none; stroke: #f0352b; stroke-width: 2; border-right: 1px solid var(--rule); }
.advanced { padding-top: 16px; text-align: center; }
.advanced a { color: inherit; text-decoration: none; border-bottom: 2px dotted #c8c8c8; }
.rightbar { height: 532px; margin-top: 19px; display: grid; grid-auto-rows: 1fr; align-items: center; color: #808080; }
.rightbar button { height: 52px; }
.rightbar .on { background: var(--on); color: #fff; }
.ta { font: 300 23px "Open Sans", sans-serif; fill: currentColor; stroke: none; text-anchor: middle; }

/* status bar */
.status { height: 42px; flex: none; display: flex; font-weight: 700; padding-right: 71px; white-space: nowrap; }
.pageno { margin: auto auto auto 69px; }
.cell { display: flex; align-items: center; border-left: 2px solid var(--rule); color: #c8c8c8; }
.text { gap: 6px; color: var(--text); }
.lang { width: 330px; padding: 0 20px 0 27px; justify-content: space-between; }
.abc { flex-direction: column; width: 36px; font: 12px/12px var(--ui); }
.abc svg { width: 16px; height: 14px; fill: none; stroke: #fff; stroke-width: 3; }
.review { width: 80px; padding-left: 12px; }
.zoom { width: 355px; padding-left: 22px; justify-content: space-between; }
```
